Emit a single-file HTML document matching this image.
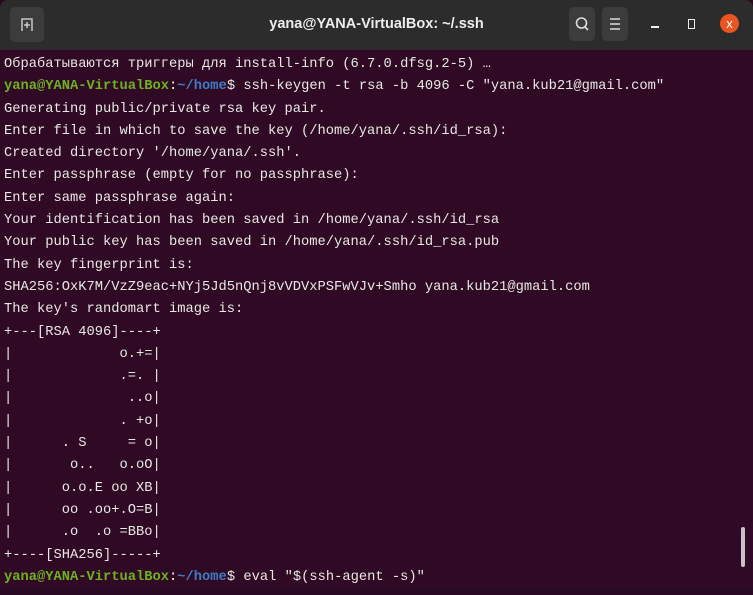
<!DOCTYPE html>
<html><head><style>
html,body{margin:0;width:753px;height:595px;overflow:hidden}
body{background:#2a0a22;font-family:"Liberation Sans",sans-serif;position:relative}
#tb{position:absolute;left:0;top:0;width:753px;height:50px;background:#2c2c2c;border-radius:8px 8px 0 0}
#term{position:absolute;left:0;top:50px;width:753px;height:538px;background:#300a24;overflow:hidden}
pre{margin:0;position:absolute;left:4px;top:4px;font-family:"Liberation Mono",monospace;font-size:13.75px;line-height:22.3px;color:#e8e8e4;letter-spacing:0}
.g{color:#6fb121;font-weight:bold}.b{color:#3f7cc4;font-weight:bold}.w{color:#fff}
.btn{position:absolute;top:7px;width:26px;height:34px;background:#3c3c3c;border-radius:5px}
.title{position:absolute;left:0;width:753px;top:16px;text-align:center;color:#ededed;font-weight:bold;font-size:14.5px}
.sb{position:absolute;left:741px;top:477px;width:4px;height:40px;background:#c8c0c5;border-radius:2px}
</style></head><body>
<div id="tb">
<div class="btn" style="left:10px;width:34px;height:35px;top:7px"><svg width="34" height="35"><path d="M12 24V12h10v12" fill="none" stroke="#ddd" stroke-width="1.3"/><path d="M17 15v6M14 18h6" stroke="#ddd" stroke-width="1.3"/></svg></div>
<div class="title">yana@YANA-VirtualBox: ~/.ssh</div>
<div class="btn" style="left:569px"><svg width="26" height="34"><circle cx="12.5" cy="16" r="5" fill="none" stroke="#ddd" stroke-width="1.6"/><path d="M16 20l3 3" stroke="#ddd" stroke-width="1.6"/></svg></div>
<div class="btn" style="left:602px"><svg width="26" height="34"><path d="M8 12h10M8 17h10M8 22h10" stroke="#ddd" stroke-width="1.5"/></svg></div>
<div style="position:absolute;left:651px;top:26px;width:8px;height:1.5px;background:#eee"></div>
<div style="position:absolute;left:688px;top:19px;width:5px;height:8px;border:1.5px solid #eee"></div>
<div style="position:absolute;left:720px;top:14px;width:19px;height:19px;border-radius:50%;background:#e95420;color:#fff;font-size:13px;text-align:center;line-height:19px">x</div>
</div>
<div id="term"><pre>Обрабатываются триггеры для install-info (6.7.0.dfsg.2-5) …
<span class="g">yana@YANA-VirtualBox</span><span class="w">:</span><span class="b">~/home</span>$ ssh-keygen -t rsa -b 4096 -C "yana.kub21@gmail.com"
Generating public/private rsa key pair.
Enter file in which to save the key (/home/yana/.ssh/id_rsa):
Created directory '/home/yana/.ssh'.
Enter passphrase (empty for no passphrase):
Enter same passphrase again:
Your identification has been saved in /home/yana/.ssh/id_rsa
Your public key has been saved in /home/yana/.ssh/id_rsa.pub
The key fingerprint is:
SHA256:OxK7M/VzZ9eac+NYj5Jd5nQnj8vVDVxPSFwVJv+Smho yana.kub21@gmail.com
The key's randomart image is:
+---[RSA 4096]----+
|             o.+=|
|             .=. |
|              ..o|
|             . +o|
|      . S     = o|
|       o..   o.oO|
|      o.o.E oo XB|
|      oo .oo+.O=B|
|      .o  .o =BBo|
+----[SHA256]-----+
<span class="g">yana@YANA-VirtualBox</span><span class="w">:</span><span class="b">~/home</span>$ eval "$(ssh-agent -s)"</pre>
<div class="sb"></div></div>
</body></html>
